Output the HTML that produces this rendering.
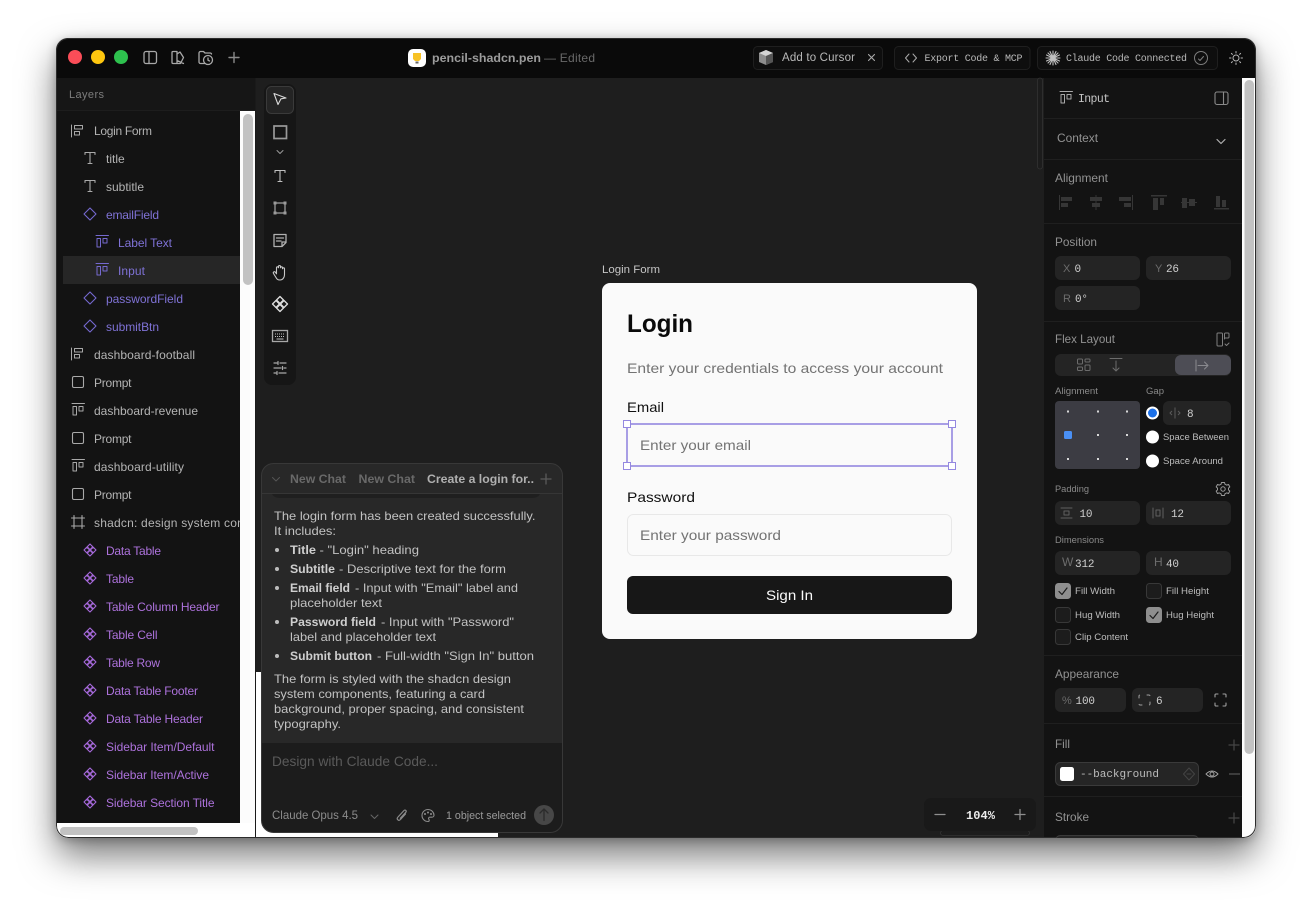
<!DOCTYPE html>
<html><head><meta charset="utf-8"><style>
html,body{margin:0;padding:0;background:#fff;width:1312px;height:912px;overflow:hidden}
#sh{position:absolute;left:56px;top:38px;width:1200px;height:800px;border-radius:13px;box-shadow:0 18px 36px rgba(0,0,0,.52),0 2px 10px rgba(0,0,0,.25)}
svg{position:absolute;left:0;top:0;filter:blur(.3px)}
text{font-family:"Liberation Sans",sans-serif;white-space:pre}
.m{font-family:"Liberation Mono",monospace}
.l{font-size:12px;fill:#b4b4b4}
.p{font-size:12px;fill:#7f72d6}
.c{font-size:12px;fill:#ad72dc}
.h{font-size:12px;fill:#929292}
.tb{font-size:12px;font-weight:bold}
.v{font-size:11px;fill:#cfcfcf}
.k{font-size:11px;fill:#6c6c6c}
.x{font-size:9.5px;fill:#bcbcbc}
.b{font-size:12px;fill:#cfcfcf;font-weight:bold}
.r{font-size:12px;fill:#c2c2c2}
.i{fill:none;stroke-linecap:round;stroke-linejoin:round}
</style></head><body>
<div id="sh"></div>
<svg width="1312" height="912" viewBox="0 0 1312 912" xmlns="http://www.w3.org/2000/svg">
<defs>
<clipPath id="w"><rect x="56" y="38" width="1200" height="800" rx="12"/></clipPath>
<clipPath id="lc"><rect x="56" y="110" width="184" height="713"/></clipPath>
<g id="hl" class="i" stroke="currentColor" stroke-width="1"><path d="M-6.5-6V6M-3.500-5.500H4.500V-2H-3.500ZM-3.500.5H1.500V4H-3.500Z"/></g>
<g id="hv" class="i" stroke="currentColor" stroke-width="1"><path d="M-6-6.500H6.500M-5-3.500H-1.500V5H-5ZM1-3.500H5V1H1Z"/></g>
<g id="tt" class="i" stroke="currentColor" stroke-width="1.100"><path d="M-5-3.500V-5.500H5V-3.500M0-5.500V5.500M-2 5.500H2"/></g>
<g id="dm" class="i" stroke="currentColor" stroke-width="1.100"><path d="M0-6L6 0L0 6L-6 0Z"/></g>
<g id="cp" class="i" stroke="currentColor" stroke-width="1.100"><path d="M0-6L2.800-3.200L0-.4L-2.800-3.200ZM0 6L2.800 3.200L0 .4L-2.800 3.200ZM-6 0L-3.200-2.800L-.4 0L-3.200 2.800ZM6 0L3.200-2.800L.4 0L3.200 2.800Z"/></g>
<rect id="sq" x="-5.500" y="-5.500" width="11" height="11" rx="1.500" fill="none" stroke="currentColor" stroke-width="1.100"/>
<g id="fr" class="i" stroke="currentColor" stroke-width="1.100"><path d="M-4-6.500V6.500M4-6.500V6.500M-6.500-4H6.500M-6.500 4H6.500"/></g>
<g id="pl" class="i" stroke="currentColor" stroke-width="1.300"><path d="M-5 0H5M0-5V5"/></g>
</defs>
<g clip-path="url(#w)">
<rect x="56" y="38" width="1200" height="800" fill="#fff"/>
<rect x="56" y="38" width="1200" height="40" fill="#0a0a0a"/>
<!-- canvas -->
<rect x="256" y="78" width="788" height="594" fill="#1e1e1e"/>
<rect x="498" y="672" width="546" height="166" fill="#1e1e1e"/>
<!-- left panel -->
<rect x="56" y="78" width="199" height="32" fill="#161616"/>
<rect x="56" y="110" width="184" height="713" fill="#131313"/>
<rect x="56" y="110" width="199" height="1" fill="#1d1d1d"/>
<rect x="240" y="112" width="15" height="711" fill="#fcfcfc"/>
<rect x="243" y="114" width="10" height="171" rx="5" fill="#c2c2c2"/>
<rect x="60" y="827" width="138" height="8" rx="4" fill="#c2c2c2"/>
<rect x="255" y="78" width="1" height="760" fill="#1a1a1a"/>
<!-- right panel -->
<rect x="1044" y="78" width="198" height="760" fill="#131313"/>
<rect x="1242" y="78" width="14" height="760" fill="#fcfcfc"/>
<rect x="1244.500" y="80" width="9.500" height="674" rx="4.700" fill="#c2c2c2"/>
<!-- canvas scrollbars -->
<rect x="1037.500" y="78" width="5" height="91" rx="2.500" fill="#1c1c1c" stroke="#333" stroke-width=".8"/>
<rect x="940.500" y="830.500" width="89" height="5" rx="2.500" fill="#1c1c1c" stroke="#333" stroke-width=".8"/>
<rect x="56.500" y="38.500" width="1199" height="799" rx="12" fill="none" stroke="#2c2c2c"/>

<!-- title bar -->
<circle cx="75" cy="57" r="7" fill="#fb4d58"/><circle cx="98" cy="57" r="7" fill="#fec70f"/><circle cx="121" cy="57" r="7" fill="#2ec14e"/>
<g class="i" stroke="#a8a8a8" stroke-width="1.300">
<rect x="144" y="51.500" width="12.500" height="12" rx="2"/><path d="M149 51.500V63.500"/>
<path d="M172 52.500a1 1 0 0 1 1-1h4v12h-4a1 1 0 0 1-1-1zM177 54l3-2l3.500 5.500l-3 6h-3.500M177 60.500l6.500 3"/>
<path d="M205 63.500h-4.500a1.500 1.500 0 0 1-1.500-1.500v-9a1.500 1.500 0 0 1 1.500-1.500h3l1.500 1.500h5a1.500 1.500 0 0 1 1.500 1"/><circle cx="208" cy="60" r="4.500"/><path d="M208 58v2.200l1.500 .8"/>
<path d="M229 57.500H239M234 52.500V62.500" stroke-width="1.400" stroke="#8a8a8a"/>
</g>
<rect x="408" y="49" width="18" height="18" rx="5" fill="#fff"/>
<path d="M413 53h8v6l-2 2h-4l-2-2z" fill="#f7c225"/><rect x="415.500" y="61.500" width="3" height="2" fill="#666"/>
<text x="432" y="62" font-size="12" font-weight="bold" fill="#9c9c9c" textLength="109" lengthAdjust="spacingAndGlyphs">pencil-shadcn.pen</text>
<text x="544" y="62" font-size="12" fill="#696969" textLength="51">— Edited</text>
<g fill="#0e0e0e" stroke="#1f1f1f"><rect x="753.500" y="46.500" width="129" height="23" rx="4"/><rect x="894.500" y="46.500" width="135.500" height="23" rx="4"/><rect x="1037.500" y="46.500" width="180" height="23" rx="4"/></g>
<path d="M759 53l7-3l7 3v9l-7 3l-7-3z" fill="#8d8d8d"/><path d="M759 53l7 3l7-3l-7-3z" fill="#d4d4d4"/><path d="M766 56v9l7-3v-9z" fill="#555"/>
<text x="782" y="61" font-size="11.500" fill="#b8b8b8" textLength="73">Add to Cursor</text>
<path class="i" stroke="#aaa" stroke-width="1.100" d="M868.500 54.500l6 6M874.500 54.500l-6 6"/>
<path class="i" stroke="#aaa" stroke-width="1" d="M909 54l-3.500 4l3.500 4M913 54l3.500 4l-3.500 4"/>
<text class="m" x="924.500" y="61" font-size="10" fill="#b8b8b8" textLength="98">Export Code &amp; MCP</text>
<path class="i" stroke="#c0c0c0" stroke-width="1.100" d="M1053 51V65M1046 58H1060M1048 53l10 10M1058 53l-10 10M1050 51.500l6 13M1056 51.500l-6 13M1046.500 55l13 6M1059.500 55l-13 6"/>
<text class="m" x="1066" y="61" font-size="10" fill="#b8b8b8" textLength="121">Claude Code Connected</text>
<circle cx="1201" cy="58" r="6.500" fill="none" stroke="#7d7d7d"/><path class="i" stroke="#7d7d7d" d="M1198.500 59l1.500 1.500l3.500-4"/>
<g class="i" stroke="#b5b5b5" stroke-width="1"><circle cx="1236" cy="58" r="3"/><path d="M1236 51.500v1.500M1236 63v1.500M1229.500 58h1.500M1241 58h1.500M1231.400 53.400l1 1M1239.600 61.600l1 1M1231.400 62.600l1-1M1239.600 54.400l1-1"/></g>

<!-- layers -->
<text x="69" y="98" font-size="11" fill="#7d7d7d" textLength="35">Layers</text>
<rect x="63" y="256" width="177" height="28" fill="#262626"/>
<g clip-path="url(#lc)">
<g color="#a9a9a9"><use href="#hl" x="78" y="131"/><use href="#tt" x="90" y="158"/><use href="#tt" x="90" y="186"/></g>
<text class="l" x="94" y="135" textLength="58">Login Form</text>
<text class="l" x="106" y="163" textLength="18.700">title</text>
<text class="l" x="106" y="191" textLength="38">subtitle</text>
<g color="#7569cf"><use href="#dm" x="90" y="214"/><use href="#hv" x="102" y="242"/><use href="#hv" x="102" y="270"/><use href="#dm" x="90" y="298"/><use href="#dm" x="90" y="326"/></g>
<text class="p" x="106" y="219" textLength="53">emailField</text>
<text class="p" x="118" y="247" textLength="54">Label Text</text>
<text class="p" x="118" y="275" textLength="27">Input</text>
<text class="p" x="106" y="303" textLength="77">passwordField</text>
<text class="p" x="106" y="331" textLength="53">submitBtn</text>
<g color="#a9a9a9"><use href="#hl" x="78" y="354"/><use href="#sq" x="78" y="382"/><use href="#hv" x="78" y="410"/><use href="#sq" x="78" y="438"/><use href="#hv" x="78" y="466"/><use href="#sq" x="78" y="494"/><use href="#fr" x="78" y="522"/></g>
<text class="l" x="94" y="359" textLength="101">dashboard-football</text>
<text class="l" x="94" y="387" textLength="37.500">Prompt</text>
<text class="l" x="94" y="415" textLength="104">dashboard-revenue</text>
<text class="l" x="94" y="443" textLength="37.500">Prompt</text>
<text class="l" x="94" y="471" textLength="90">dashboard-utility</text>
<text class="l" x="94" y="499" textLength="37.500">Prompt</text>
<text class="l" x="94" y="527" textLength="160">shadcn: design system comp</text>
<g color="#a468d8"><use href="#cp" x="90" y="550"/><use href="#cp" x="90" y="578"/><use href="#cp" x="90" y="606"/><use href="#cp" x="90" y="634"/><use href="#cp" x="90" y="662"/><use href="#cp" x="90" y="690"/><use href="#cp" x="90" y="718"/><use href="#cp" x="90" y="746"/><use href="#cp" x="90" y="774"/><use href="#cp" x="90" y="802"/></g>
<text class="c" x="106" y="555" textLength="55">Data Table</text>
<text class="c" x="106" y="583" textLength="28">Table</text>
<text class="c" x="106" y="611" textLength="113.500">Table Column Header</text>
<text class="c" x="106" y="639" textLength="51.500">Table Cell</text>
<text class="c" x="106" y="667" textLength="54">Table Row</text>
<text class="c" x="106" y="695" textLength="92">Data Table Footer</text>
<text class="c" x="106" y="723" textLength="97">Data Table Header</text>
<text class="c" x="106" y="751" textLength="108.500">Sidebar Item/Default</text>
<text class="c" x="106" y="779" textLength="103">Sidebar Item/Active</text>
<text class="c" x="106" y="807" textLength="108.500">Sidebar Section Title</text>
</g>

<!-- toolbar -->
<rect x="264" y="84" width="32" height="301" rx="8" fill="#161616"/>
<rect x="266.500" y="86.500" width="27" height="27" rx="5" fill="#242424" stroke="#3a3a3a"/>
<g class="i" stroke="#d8d8d8" stroke-width="1.100" transform="translate(280 99)"><path d="M-6-5.500L6-1L1-.2L-2 5.500Z"/></g>
<rect x="274" y="126" width="12.500" height="12.500" fill="none" stroke="#9a9a9a" stroke-width="1.700"/>
<path class="i" stroke="#999" d="M277 150.500l3 3l3-3"/>
<g color="#c0c0c0"><use href="#tt" x="280" y="176"/></g>
<rect x="275" y="203" width="10" height="10" fill="none" stroke="#9a9a9a" stroke-width="1.300"/>
<g fill="#9a9a9a"><rect x="273.500" y="201.500" width="3" height="3"/><rect x="283.500" y="201.500" width="3" height="3"/><rect x="273.500" y="211.500" width="3" height="3"/><rect x="283.500" y="211.500" width="3" height="3"/></g>
<path class="i" stroke="#b0b0b0" stroke-width="1.300" d="M274 234.500h12v8l-4 4h-8zM276.500 238h7M276.500 241h4.500M282 246v-4h4"/>
<path class="i" stroke="#c8c8c8" stroke-width="1.100" d="M276 277.500l-2.500-4c-.8-1.500 1-2.500 2-1.200l1 1.500v-6c0-1.300 2-1.300 2 0v-1.300c0-1.300 2-1.300 2 0v1.300c0-1.300 2-1.300 2 0v1c0-1.300 2-1.300 2 0v6c0 3-2 5.200-4.500 5.200s-3-1-4-2.500z"/>
<g color="#dcdcdc" transform="translate(280 304) scale(1.250)"><use href="#cp"/></g>
<rect x="272.500" y="330.500" width="15" height="11" fill="none" stroke="#a8a8a8" stroke-width="1.300"/>
<path stroke="#c0c0c0" stroke-dasharray="1 1" d="M275 334h10M275 336.500h10"/><path stroke="#c0c0c0" d="M276.500 339h7"/>
<path class="i" stroke="#a8a8a8" stroke-width="1.200" d="M274 363h3M280 363h6M274 368h7M284 368h2M274 373h2M279 373h7M278 361.500v3M282.500 366.500v3M277 371.500v3"/>

<!-- card -->
<text x="602" y="273" font-size="11" fill="#c4c4c4" textLength="58" lengthAdjust="spacingAndGlyphs">Login Form</text>
<rect x="602" y="283" width="375" height="356" rx="8" fill="#fafafa"/>
<text x="627" y="332" font-size="25" font-weight="bold" fill="#0a0a0a" textLength="66" lengthAdjust="spacingAndGlyphs">Login</text>
<text x="627" y="373" font-size="14" fill="#737373" textLength="316" lengthAdjust="spacingAndGlyphs">Enter your credentials to access your account</text>
<text x="627" y="412" font-size="14" fill="#111" textLength="37" lengthAdjust="spacingAndGlyphs">Email</text>
<text x="640" y="450" font-size="14" fill="#737373" textLength="111" lengthAdjust="spacingAndGlyphs">Enter your email</text>
<rect x="627" y="424" width="325" height="42" fill="none" stroke="#9488e0" stroke-width="1.600"/>
<g fill="#fff" stroke="#9488e0"><rect x="623.500" y="420.500" width="7" height="7"/><rect x="948.500" y="420.500" width="7" height="7"/><rect x="623.500" y="462.500" width="7" height="7"/><rect x="948.500" y="462.500" width="7" height="7"/></g>
<text x="627" y="502" font-size="14" fill="#111" textLength="68" lengthAdjust="spacingAndGlyphs">Password</text>
<rect x="627.500" y="514.500" width="324" height="41" rx="6" fill="#fafafa" stroke="#e8e8e8"/>
<text x="640" y="540" font-size="14" fill="#737373" textLength="141" lengthAdjust="spacingAndGlyphs">Enter your password</text>
<rect x="627" y="576" width="325" height="38" rx="6" fill="#171717"/>
<text x="766" y="600" font-size="14" fill="#fafafa" textLength="47" lengthAdjust="spacingAndGlyphs">Sign In</text>

<!-- chat -->
<rect x="261.500" y="463.500" width="301" height="369" rx="12" fill="#282828" stroke="#383838"/>
<path d="M262 743h300v77a12 12 0 0 1-12 12h-276a12 12 0 0 1-12-12z" fill="#1c1c1c"/>
<rect x="262" y="493" width="300" height="1" fill="#363636"/>
<path d="M272 494h268q-2 4-8 4h-252q-6 0-8-4z" fill="#1f1f1f"/>
<path class="i" stroke="#555" d="M272.500 477.500l3.500 3.500l3.500-3.500"/>
<text x="290" y="483" class="tb" fill="#696969" textLength="56" lengthAdjust="spacingAndGlyphs">New Chat</text>
<text x="358.500" y="483" class="tb" fill="#696969" textLength="56.500" lengthAdjust="spacingAndGlyphs">New Chat</text>
<text x="427" y="483" class="tb" fill="#b0b0b0" textLength="107" lengthAdjust="spacingAndGlyphs">Create a login for..</text>
<g color="#5a5a5a"><use href="#pl" x="546" y="479"/></g>
<text class="r" x="274" y="520" textLength="261.500" lengthAdjust="spacingAndGlyphs">The login form has been created successfully.</text>
<text class="r" x="274" y="535" textLength="62" lengthAdjust="spacingAndGlyphs">It includes:</text>
<g fill="#bdbdbd"><circle cx="277" cy="550" r="2"/><circle cx="277" cy="569" r="2"/><circle cx="277" cy="588" r="2"/><circle cx="277" cy="622" r="2"/><circle cx="277" cy="656" r="2"/></g>
<text class="b" x="290" y="554" textLength="26" lengthAdjust="spacingAndGlyphs">Title</text><text class="r" x="319.500" y="554" textLength="99.500" lengthAdjust="spacingAndGlyphs">- "Login" heading</text>
<text class="b" x="290" y="573" textLength="45" lengthAdjust="spacingAndGlyphs">Subtitle</text><text class="r" x="339" y="573" textLength="167" lengthAdjust="spacingAndGlyphs">- Descriptive text for the form</text>
<text class="b" x="290" y="592" textLength="60" lengthAdjust="spacingAndGlyphs">Email field</text><text class="r" x="355" y="592" textLength="163" lengthAdjust="spacingAndGlyphs">- Input with "Email" label and</text>
<text class="r" x="290" y="607" textLength="92" lengthAdjust="spacingAndGlyphs">placeholder text</text>
<text class="b" x="290" y="626" textLength="86" lengthAdjust="spacingAndGlyphs">Password field</text><text class="r" x="381" y="626" textLength="133" lengthAdjust="spacingAndGlyphs">- Input with "Password"</text>
<text class="r" x="290" y="641" textLength="146" lengthAdjust="spacingAndGlyphs">label and placeholder text</text>
<text class="b" x="290" y="660" textLength="82" lengthAdjust="spacingAndGlyphs">Submit button</text><text class="r" x="377" y="660" textLength="157" lengthAdjust="spacingAndGlyphs">- Full-width "Sign In" button</text>
<text class="r" x="274" y="683" textLength="237" lengthAdjust="spacingAndGlyphs">The form is styled with the shadcn design</text>
<text class="r" x="274" y="698" textLength="211" lengthAdjust="spacingAndGlyphs">system components, featuring a card</text>
<text class="r" x="274" y="713" textLength="250" lengthAdjust="spacingAndGlyphs">background, proper spacing, and consistent</text>
<text class="r" x="274" y="728" textLength="67" lengthAdjust="spacingAndGlyphs">typography.</text>
<text x="272" y="766" font-size="14" fill="#5a5a5a" textLength="166" lengthAdjust="spacingAndGlyphs">Design with Claude Code...</text>
<text x="272" y="819" font-size="12" fill="#8c8c8c" textLength="86" lengthAdjust="spacingAndGlyphs">Claude Opus 4.5</text>
<path class="i" stroke="#666" d="M371 815l3.500 3.500l3.500-3.500"/>
<path class="i" stroke="#8a8a8a" stroke-width="1.200" d="M405.500 814l-5 5.500c-2 2-4.500-.5-2.500-2.500l6-6.500c1.200-1.300 3 .5 1.800 1.800l-5.500 6"/>
<g class="i" stroke="#8a8a8a" stroke-width="1.100"><path d="M428 809.500a6 6 0 1 0 0 12c1.500 0 1.500-1.500 .8-2.300c-.6-.9 0-2 1-2h2c1.500 0 2.200-1.200 2.200-2a6 6 0 0 0-6-5.700z"/><circle cx="425" cy="814" r=".5"/><circle cx="428" cy="812.500" r=".5"/><circle cx="431" cy="814" r=".5"/></g>
<text x="446" y="819" font-size="11" fill="#9a9a9a" textLength="80" lengthAdjust="spacingAndGlyphs">1 object selected</text>
<circle cx="544" cy="815" r="10" fill="#474747"/>
<path class="i" stroke="#2b2b2b" stroke-width="1.300" d="M544 820.500v-11M540 813l4-4l4 4"/>

<!-- zoom -->
<rect x="924" y="798" width="112" height="33" rx="7" fill="#191919"/>
<path class="i" stroke="#8e8e8e" stroke-width="1.300" d="M935 814.500H945M1015 814.500H1025M1020 809.500V819.500"/>
<text class="m" x="966" y="819" font-size="12" font-weight="bold" fill="#ececec" textLength="29">104%</text>

<!-- right panel content -->
<g color="#a9a9a9"><use href="#hv" x="1066" y="98"/></g>
<text class="m" x="1078" y="102" font-size="11.500" fill="#c4c4c4" textLength="32">Input</text>
<g class="i" stroke="#8a8a8a" stroke-width="1.100"><rect x="1215" y="92" width="13" height="12.500" rx="2"/><path d="M1223.500 92V104.500"/></g>
<g fill="#1f1f1f"><rect x="1044" y="118" width="198" height="1"/><rect x="1044" y="159" width="198" height="1"/><rect x="1044" y="223" width="198" height="1"/><rect x="1044" y="321" width="198" height="1"/><rect x="1044" y="655" width="198" height="1"/><rect x="1044" y="723" width="198" height="1"/><rect x="1044" y="796" width="198" height="1"/></g>
<text x="1057" y="142" class="h" textLength="41" lengthAdjust="spacingAndGlyphs">Context</text>
<path class="i" stroke="#b0b0b0" stroke-width="1.200" d="M1217 139.500l4 4l4-4"/>
<text x="1055" y="182" class="h" textLength="53" lengthAdjust="spacingAndGlyphs">Alignment</text>
<g fill="#363636"><rect x="1059" y="195" width="1" height="15"/><rect x="1061" y="197" width="11" height="4"/><rect x="1061" y="203" width="7" height="4"/>
<rect x="1090" y="197" width="12" height="4"/><rect x="1092" y="203" width="8" height="4"/><rect x="1095.500" y="195" width="1" height="15"/>
<rect x="1119" y="197" width="12" height="4"/><rect x="1124" y="203" width="7" height="4"/><rect x="1132" y="195" width="1" height="15"/>
<rect x="1151" y="195" width="16" height="1.500"/><rect x="1153" y="198" width="5" height="12"/><rect x="1160" y="198" width="4" height="7"/>
<rect x="1182" y="198" width="5" height="10"/><rect x="1189" y="199" width="6" height="7"/><rect x="1181" y="202" width="16" height="1"/>
<rect x="1214" y="208" width="15" height="1.500"/><rect x="1216" y="196" width="4" height="11"/><rect x="1222" y="200" width="4" height="7"/></g>
<text x="1055" y="246" class="h" textLength="42" lengthAdjust="spacingAndGlyphs">Position</text>
<g fill="#242424"><rect x="1055" y="256" width="85" height="24" rx="6"/><rect x="1146" y="256" width="85" height="24" rx="6"/><rect x="1055" y="286" width="85" height="24" rx="6"/>
<rect x="1055" y="354" width="176" height="22" rx="6"/>
<rect x="1163" y="401" width="68" height="24" rx="6"/>
<rect x="1055" y="501" width="85" height="24" rx="6"/><rect x="1146" y="501" width="85" height="24" rx="6"/>
<rect x="1055" y="551" width="85" height="24" rx="6"/><rect x="1146" y="551" width="85" height="24" rx="6"/>
<rect x="1055" y="688" width="71" height="24" rx="6"/><rect x="1132" y="688" width="71" height="24" rx="6"/></g>
<text class="k" x="1063" y="272">X</text><text class="m v" x="1074.500" y="272" textLength="7">0</text>
<text class="k" x="1155" y="272">Y</text><text class="m v" x="1166" y="272" textLength="13">26</text>
<text class="k" x="1063" y="302">R</text><text class="m v" x="1075" y="302" textLength="13">0°</text>
<text x="1055" y="343" class="h" textLength="60" lengthAdjust="spacingAndGlyphs">Flex Layout</text>
<g class="i" stroke="#7f7f7f"><rect x="1217" y="333" width="5.500" height="13" rx="1"/><path d="M1224.500 339v-5a1 1 0 0 1 1-1h2.500a1 1 0 0 1 1 1v3a1 1 0 0 1-1 1h-3M1225 344l1.500 1.500l2.500-2.500"/></g>
<rect x="1175" y="355" width="56" height="20" rx="6" fill="#4d4d55"/>
<g class="i" stroke="#6c6c6c"><rect x="1077.500" y="359" width="5" height="5" rx="1"/><rect x="1085" y="359" width="5" height="3" rx="1"/><rect x="1077.500" y="367" width="5" height="3.500" rx="1"/><rect x="1085" y="365" width="5" height="5.500" rx="1"/><path d="M1110 358.500h12M1116 361v10M1113 368l3 3l3-3"/></g>
<path class="i" stroke="#8a8a8f" d="M1196 360v11M1198 365.500h10M1204.500 362l3.500 3.500l-3.500 3.500"/>
<text x="1055" y="394" font-size="9.500" fill="#8a8a8a" textLength="43" lengthAdjust="spacingAndGlyphs">Alignment</text>
<text x="1146" y="394" font-size="9.500" fill="#8a8a8a" textLength="18" lengthAdjust="spacingAndGlyphs">Gap</text>
<rect x="1055" y="401" width="85" height="68" rx="4" fill="#3c3c43"/>
<g fill="#d8d8d8"><rect x="1067" y="410.500" width="2" height="2"/><rect x="1097" y="410.500" width="2" height="2"/><rect x="1126" y="410.500" width="2" height="2"/><rect x="1097" y="434" width="2" height="2"/><rect x="1126" y="434" width="2" height="2"/><rect x="1067" y="458" width="2" height="2"/><rect x="1097" y="458" width="2" height="2"/><rect x="1126" y="458" width="2" height="2"/></g>
<rect x="1064" y="431" width="8" height="8" rx="1.500" fill="#4a90f5"/>
<circle cx="1152.500" cy="413" r="6.500" fill="#fff"/><circle cx="1152.500" cy="413" r="4.500" fill="#1b70e8"/>
<path stroke="#5a5a5a" fill="none" d="M1175 407.500v11M1172 411l-2 2l2 2M1178 411l2 2l-2 2"/>
<text class="m v" x="1187" y="417" textLength="7">8</text>
<circle cx="1152.500" cy="437" r="6.500" fill="#fff"/><circle cx="1152.500" cy="461" r="6.500" fill="#fff"/>
<text class="x" x="1163" y="440" textLength="66" lengthAdjust="spacingAndGlyphs">Space Between</text>
<text class="x" x="1163" y="464" textLength="60" lengthAdjust="spacingAndGlyphs">Space Around</text>
<text x="1055" y="492" font-size="9.500" fill="#8a8a8a" textLength="34" lengthAdjust="spacingAndGlyphs">Padding</text>
<g class="i" stroke="#9a9a9a" stroke-width="1"><circle cx="1223" cy="489" r="2.200"/><path d="M1221.500 482.500h3l.5 1.800l1.700.8l1.800-.6l1.300 2.400l-1.300 1.200v1.800l1.300 1.200l-1.300 2.400l-1.800-.6l-1.700.8l-.5 1.800h-3l-.5-1.800l-1.700-.8l-1.800.6l-1.300-2.400l1.300-1.200v-1.800l-1.300-1.200l1.300-2.400l1.800.6l1.700-.8z"/></g>
<g class="i" stroke="#606060"><path d="M1061 508h11M1061 518h11"/><rect x="1064" y="511" width="5" height="4"/><path d="M1153 508v10M1163 508v10"/><rect x="1156" y="510" width="4" height="6"/></g>
<text class="m v" x="1079.500" y="517" textLength="13">10</text>
<text class="m v" x="1171" y="517" textLength="13">12</text>
<text x="1055" y="543" font-size="9.500" fill="#8a8a8a" textLength="49" lengthAdjust="spacingAndGlyphs">Dimensions</text>
<text class="k" x="1062" y="566" style="font-size:12px">W</text><text class="m v" x="1075" y="567" textLength="19.500">312</text>
<text class="k" x="1154" y="566" style="font-size:12px">H</text><text class="m v" x="1166" y="567" textLength="13">40</text>
<g fill="#1c1c1c" stroke="#383838"><rect x="1055.500" y="583.500" width="15" height="15" rx="3" fill="#8e8e8e" stroke="#8e8e8e"/><rect x="1146.500" y="583.500" width="15" height="15" rx="3"/><rect x="1055.500" y="607.500" width="15" height="15" rx="3"/><rect x="1146.500" y="607.500" width="15" height="15" rx="3" fill="#8e8e8e" stroke="#8e8e8e"/><rect x="1055.500" y="629.500" width="15" height="15" rx="3"/></g>
<path class="i" stroke="#1b1b1b" stroke-width="1.200" d="M1059 591.500l3 3l5-6.500M1150 615.500l3 3l5-6.500"/>
<text class="x" x="1075" y="594" textLength="40" lengthAdjust="spacingAndGlyphs">Fill Width</text>
<text class="x" x="1166" y="594" textLength="43" lengthAdjust="spacingAndGlyphs">Fill Height</text>
<text class="x" x="1075" y="618" textLength="45" lengthAdjust="spacingAndGlyphs">Hug Width</text>
<text class="x" x="1166" y="618" textLength="48" lengthAdjust="spacingAndGlyphs">Hug Height</text>
<text class="x" x="1075" y="640" textLength="53" lengthAdjust="spacingAndGlyphs">Clip Content</text>
<text x="1055" y="678" class="h" textLength="64" lengthAdjust="spacingAndGlyphs">Appearance</text>
<text class="k" x="1062" y="704">%</text><text class="m v" x="1075.500" y="704" textLength="19.500">100</text>
<path class="i" stroke="#a0a0a0" stroke-dasharray="3 4" d="M1139 698v-2a1 1 0 0 1 1-1h2M1147 695h2a1 1 0 0 1 1 1v2M1150 702v2a1 1 0 0 1-1 1h-2M1142 705h-2a1 1 0 0 1-1-1v-2"/>
<text class="m v" x="1156" y="704" textLength="7">6</text>
<path class="i" stroke="#a0a0a0" stroke-width="1.100" d="M1215 697v-2a1 1 0 0 1 1-1h2M1223 694h2a1 1 0 0 1 1 1v2M1226 703v2a1 1 0 0 1-1 1h-2M1218 706h-2a1 1 0 0 1-1-1v-2"/>
<text x="1055" y="748" class="h" textLength="15" lengthAdjust="spacingAndGlyphs">Fill</text>
<g color="#444"><use href="#pl" x="1234" y="745"/></g>
<rect x="1055.500" y="762.500" width="143" height="23" rx="5" fill="#252525" stroke="#3a3a3a"/>
<rect x="1060" y="767" width="14" height="14" rx="2.500" fill="#fff"/>
<text class="m" x="1080" y="777" font-size="11" fill="#bcbcbc" textLength="79">--background</text>
<path class="i" stroke="#444" d="M1189 768l5.500 6l-5.500 6l-5.500-6zM1187 774h4"/>
<g class="i" stroke="#a0a0a0"><path d="M1206 774q6-6 12 0q-6 6-12 0z"/><circle cx="1212" cy="774" r="2"/></g>
<path stroke="#555" stroke-width="1.300" d="M1229 774H1240"/>
<text x="1055" y="821" class="h" textLength="34" lengthAdjust="spacingAndGlyphs">Stroke</text>
<g color="#444"><use href="#pl" x="1234" y="818"/></g>
<rect x="1055.500" y="835.500" width="143" height="10" rx="5" fill="#252525" stroke="#3a3a3a"/>
</g>
</svg>
</body></html>
